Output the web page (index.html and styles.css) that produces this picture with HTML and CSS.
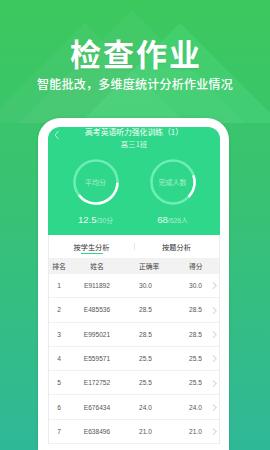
FILE: index.html
```html
<!DOCTYPE html>
<html lang="zh-CN">
<head>
  <meta charset="UTF-8">
  <meta name="viewport" content="width=device-width, initial-scale=1.0">
  <title>检查作业</title>
  <link rel="stylesheet" href="styles.css">
</head>
<body>
  <!-- background peaks -->
  <svg class="peaks" width="270" height="130" viewBox="0 0 270 130">
    <polygon points="85,23 185,123 -15,123" fill="rgba(255,255,255,0.04)"/>
    <polygon points="132,10 245,123 19,123" fill="rgba(255,255,255,0.04)"/>
    <polygon points="180,23 280,123 80,123" fill="rgba(90,235,150,0.22)"/>
  </svg>

  <header class="hero">
    <h1>检查作业</h1>
    <p>智能批改，多维度统计分析作业情况</p>
  </header>

  <div class="phone">
    <div class="screen">
      <div class="top">
        <svg class="back" width="6" height="10" viewBox="0 0 6 10">
          <polyline points="4.5,1 1,5 4.5,9" fill="none" stroke="rgba(255,255,255,0.85)" stroke-width="0.8"/>
        </svg>
        <div class="hw-title">高考英语听力强化训练（1）</div>
        <div class="hw-class">高三1班</div>

        <div class="rings">
          <div class="stat">
            <div class="ring">
              <svg width="46" height="46" viewBox="0 0 46 46">
                <circle cx="23" cy="23" r="21.5" fill="none" stroke="#6eedb6" stroke-width="2.6"/>
                <circle cx="23" cy="23" r="21.5" fill="none" stroke="#fff" stroke-width="2.6"
                        stroke-dasharray="52.5 200" transform="rotate(2 23 23)"/>
              </svg>
              <span>平均分</span>
            </div>
            <div class="value">12.5<small>/30分</small></div>
          </div>
          <div class="stat">
            <div class="ring">
              <svg width="46" height="46" viewBox="0 0 46 46">
                <circle cx="23" cy="23" r="21.5" fill="none" stroke="#6eedb6" stroke-width="2.6"/>
                <circle cx="23" cy="23" r="21.5" fill="none" stroke="#fff" stroke-width="2.6"
                        stroke-dasharray="23 200" transform="rotate(-18 23 23)"/>
              </svg>
              <span>完成人数</span>
            </div>
            <div class="value">68<small>/626人</small></div>
          </div>
        </div>
      </div>

      <div class="tabs">
        <div class="tab active">按学生分析</div>
        <div class="tab">按题分析</div>
      </div>

      <div class="table">
        <div class="row head">
          <span>排名</span><span>姓名</span><span class="num">正确率</span><span class="num">得分</span><span></span>
        </div>
        <script>
          const rows = [
            ['1', 'E911892', '30.0', '30.0'],
            ['2', 'E485536', '28.5', '28.5'],
            ['3', 'E995021', '28.5', '28.5'],
            ['4', 'E559571', '25.5', '25.5'],
            ['5', 'E172752', '25.5', '25.5'],
            ['6', 'E676434', '24.0', '24.0'],
            ['7', 'E638496', '21.0', '21.0']
          ];
          rows.forEach(r => {
            document.write(`
              <div class="row">
                <span>${r[0]}</span><span>${r[1]}</span>
                <span class="num">${r[2]}</span><span class="num">${r[3]}</span>
                <span class="arrow"></span>
              </div>
            `);
          });
        </script>
      </div>
    </div>
  </div>
</body>
</html>
```

FILE: styles.css
```css
body {
  margin: 0;
  width: 270px;
  height: 450px;
  overflow: hidden;
  position: relative;
  font-family: "Noto Sans CJK SC", "Liberation Sans", sans-serif;
  background: linear-gradient(180deg, #3dc85d 0%, #38c274 45%, #2fb897 100%);
}

.peaks {
  position: absolute;
  left: 0;
  top: 0;
}

.hero {
  position: relative;
  text-align: center;
  color: #fff;
  padding-top: 37px;
}

.hero h1 {
  margin: 0;
  font-size: 31px;
  line-height: 32px;
  font-weight: 700;
  letter-spacing: 2px;
  padding-left: 2px;
  text-shadow: 0 1px 2px rgba(0, 0, 0, 0.08);
}

.hero p {
  margin: 8px 0 0;
  font-size: 12px;
  line-height: 14px;
  font-weight: 500;
  letter-spacing: 0.25px;
}

.phone {
  position: relative;
  width: 172px;
  height: 323px;
  margin: 27px 0 0 38px;
  padding: 9px 9px 0 10px;
  background: #fff;
  border-radius: 22px 22px 0 0;
  box-shadow: 0 0 3px rgba(0, 0, 0, 0.12);
  overflow: hidden;
}

.screen {
  background: #fff;
  border-radius: 12px 12px 0 0;
  overflow: hidden;
}

.top {
  position: relative;
  background: #2ed78a;
  color: #fff;
  text-align: center;
  padding-bottom: 8px;
}

.back {
  position: absolute;
  left: 6px;
  top: 3px;
}

.hw-title {
  font-size: 7.8px;
  line-height: 10px;
}

.hw-class {
  font-size: 7.4px;
  line-height: 10px;
  margin-top: 2px;
  color: rgba(255, 255, 255, 0.85);
}

.rings {
  display: flex;
  justify-content: center;
  gap: 31px;
  margin-top: 10px;
}

.stat {
  width: 46px;
  display: flex;
  flex-direction: column;
  align-items: center;
}

.ring {
  position: relative;
  width: 46px;
  height: 46px;
}

.ring svg {
  display: block;
}

.ring span {
  position: absolute;
  inset: 0;
  display: flex;
  align-items: center;
  justify-content: center;
  font-size: 7px;
  color: rgba(255, 255, 255, 0.6);
  white-space: nowrap;
}

.value {
  margin-top: 9px;
  font-family: "Liberation Sans", "Noto Sans CJK SC", sans-serif;
  font-size: 9.6px;
  line-height: 12px;
  white-space: nowrap;
  color: rgba(255, 255, 255, 0.92);
}

.value small {
  font-family: "Liberation Sans", "Noto Sans CJK SC", sans-serif;
  font-size: 6.8px;
  color: rgba(255, 255, 255, 0.6);
}

.tabs {
  display: flex;
  height: 23px;
  border-left: 1px solid #ececec;
  border-right: 1px solid #ececec;
}

.tab {
  flex: 1;
  display: flex;
  align-items: center;
  justify-content: center;
  font-size: 7.2px;
  color: #333;
  position: relative;
}

.tab + .tab::before {
  content: "";
  position: absolute;
  left: 0;
  top: 8px;
  height: 7px;
  border-left: 1px solid #e4e4e4;
}

.tab.active::after {
  content: "";
  position: absolute;
  left: 50%;
  bottom: 4px;
  width: 22px;
  margin-left: -11px;
  border-bottom: 1.2px solid #2ed78a;
}

.table {
  border-left: 1px solid #ececec;
  border-right: 1px solid #ececec;
}

.row {
  display: grid;
  grid-template-columns: 20px 56px 46px 38px 1fr;
  align-items: center;
  height: 24.3px;
  box-sizing: border-box;
  border-bottom: 1px solid #f1f1f1;
  font-family: "Liberation Sans", "Noto Sans CJK SC", sans-serif;
  font-size: 6.6px;
  color: #555;
}

.row span {
  text-align: center;
  white-space: nowrap;
}

.row .num {
  text-align: left;
}

.row span:nth-child(3) {
  padding-left: 14px;
}

.row span:nth-child(4) {
  padding-left: 18px;
}

.row.head {
  height: 16px;
  background: #f2f2f2;
  border-bottom: none;
  font-family: "Noto Sans CJK SC", sans-serif;
  font-size: 6.8px;
  color: #444;
}

.row .arrow {
  justify-self: start;
  width: 3.5px;
  height: 3.5px;
  margin-left: 2px;
  border-top: 1px solid #d6d6d6;
  border-right: 1px solid #d6d6d6;
  transform: rotate(45deg);
}
```
